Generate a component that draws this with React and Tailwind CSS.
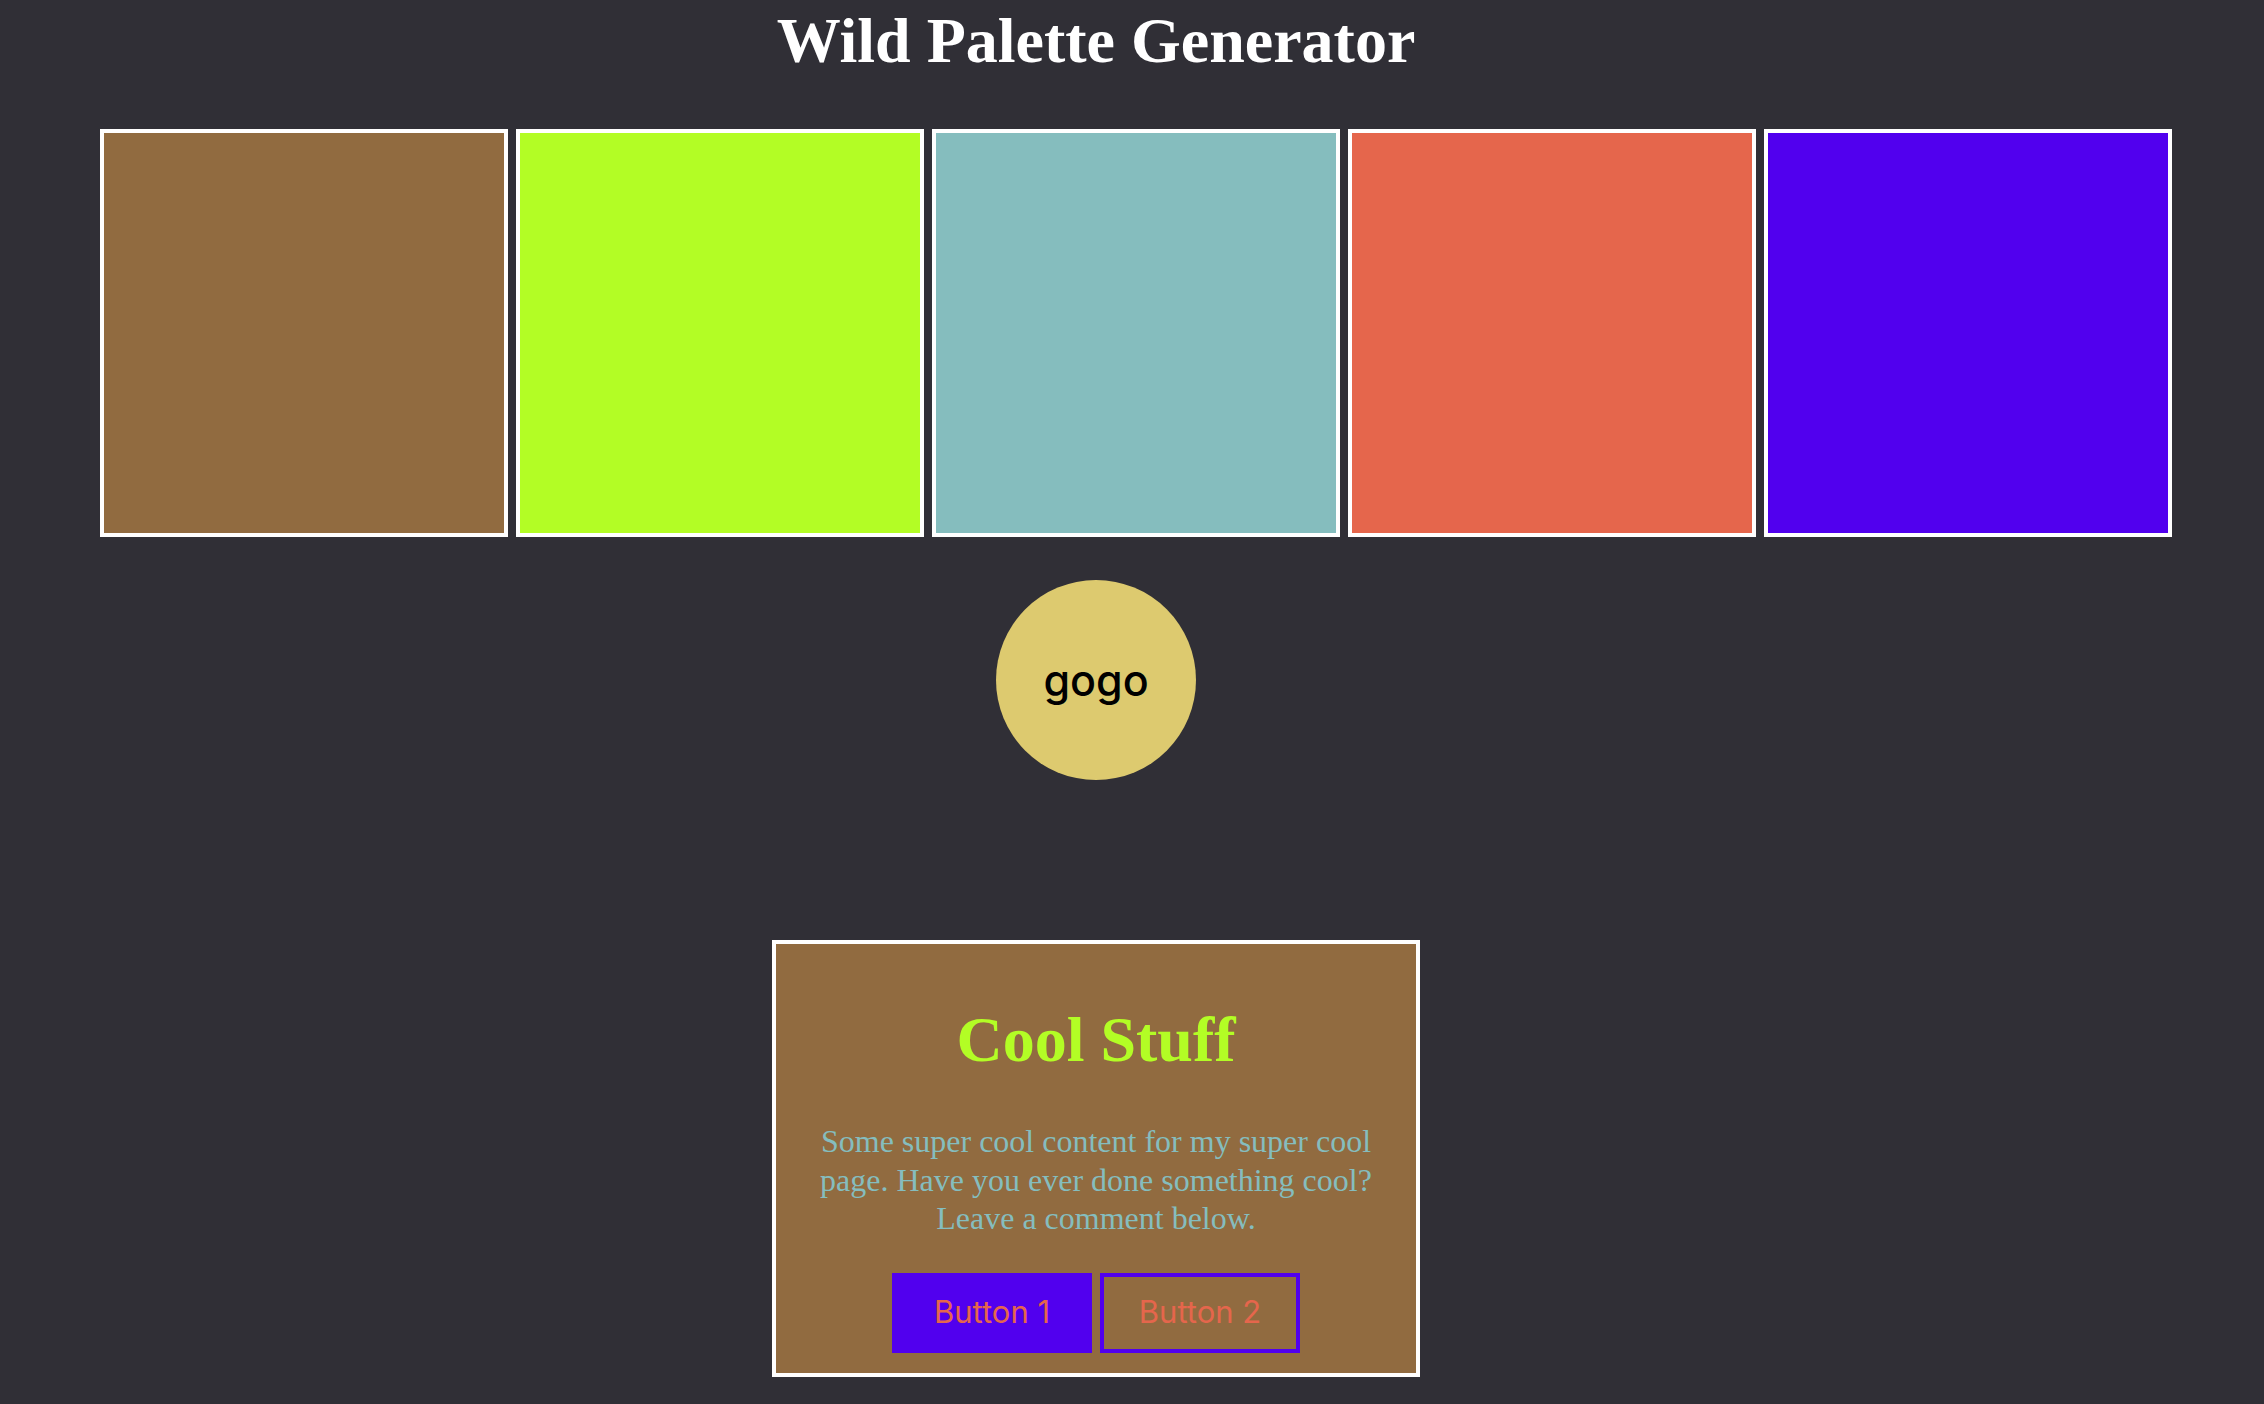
import React from 'react';

// palette swatches, left to right
const SWATCHES = ['#916b40', '#b3fd25', '#85bdbe', '#e5664c', '#5100ee'];

export default function App() {
  return (
    <div className="min-h-screen w-full bg-[#302f36]">
      <div className="flex w-[2192px] flex-col items-center pt-[4px]">
        <h1 className="font-['Liberation_Serif','Times_New_Roman',serif] text-[64px] font-bold leading-[74px] text-white">
          Wild Palette Generator
        </h1>

        {/* swatch row */}
        <div className="mt-[51px] flex gap-2 self-start pl-[100px]">
          {SWATCHES.map((c) => (
            <div key={c} className="h-[408px] w-[408px] border-4 border-white" style={{ backgroundColor: c }} />
          ))}
        </div>

        <button className="mt-[43px] flex h-[200px] w-[200px] items-center justify-center rounded-full bg-[#ddca6f] pt-[1px] font-['Inter','Liberation_Sans',sans-serif] text-[43px] font-medium text-black">
          gogo
        </button>

        {/* card */}
        <div className="mt-[160px] flex w-[648px] flex-col items-center border-4 border-white bg-[#916b40] px-[40px] pt-[59px] pb-[20px]">
          <h2 className="font-['Liberation_Serif','Times_New_Roman',serif] text-[64px] font-bold leading-[74px] text-[#b3fd25]">
            Cool Stuff
          </h2>
          <p className="mt-[45px] text-center font-['Liberation_Serif','Times_New_Roman',serif] text-[32px] leading-[38.5px] text-[#85bdbe]">
            Some super cool content for my super cool page. Have you ever done something cool? Leave a comment below.
          </p>
          <div className="mt-[35px] flex gap-2">
            <button className="flex h-[80px] w-[200px] items-center justify-center bg-[#5100ee] font-['Inter','Liberation_Sans',sans-serif] text-[31px] text-[#e5664c]">
              Button 1
            </button>
            <button className="flex h-[80px] w-[200px] items-center justify-center border-4 border-[#5100ee] font-['Inter','Liberation_Sans',sans-serif] text-[31px] text-[#e5664c]">
              Button 2
            </button>
          </div>
        </div>
      </div>
    </div>
  );
}
